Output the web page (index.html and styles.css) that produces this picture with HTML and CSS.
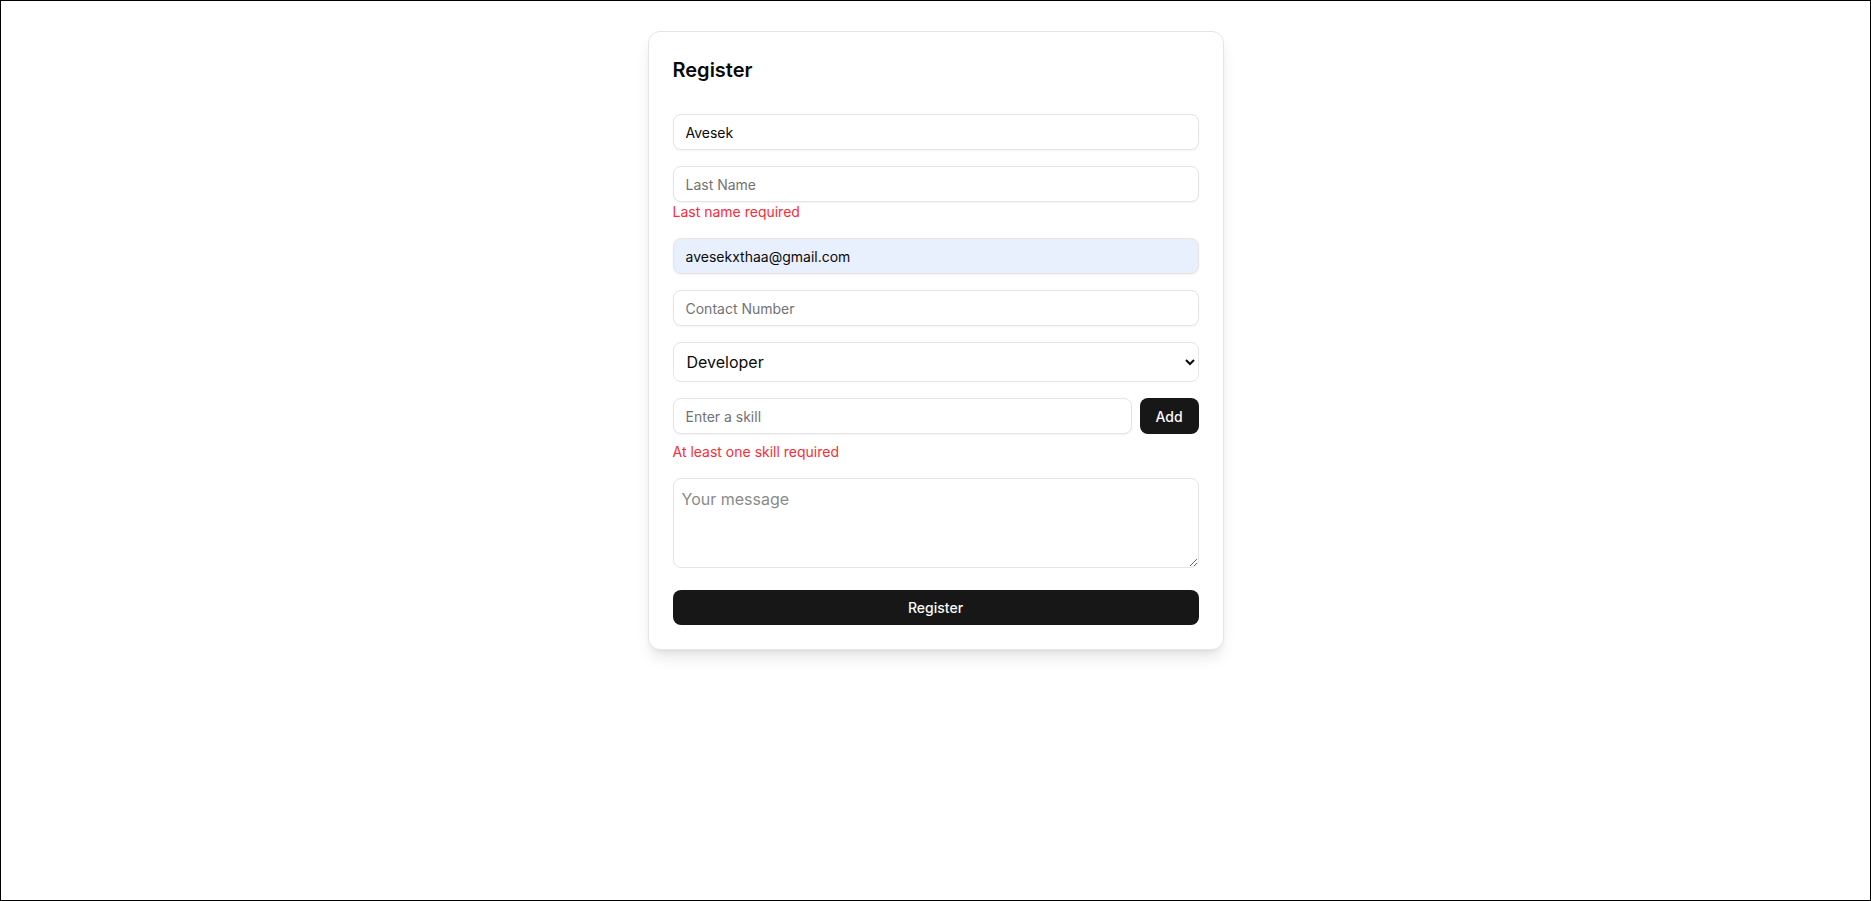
FILE: index.html
```html
<!DOCTYPE html>
<html lang="en">
<head>
<meta charset="utf-8">
<title>Register</title>
<link rel="stylesheet" href="styles.css">
</head>
<body>
<div class="frame">
  <div class="card">
    <h2 class="title">Register</h2>
    <form class="form" novalidate>
      <input class="input" type="text" value="Avesek" placeholder="First Name">
      <div class="field">
        <input class="input" type="text" placeholder="Last Name">
        <p class="error">Last name required</p>
      </div>
      <input class="input autofill" type="email" value="avesekxthaa@gmail.com" placeholder="Email">
      <input class="input" type="tel" placeholder="Contact Number">
      <select class="select">
        <option>Developer</option>
        <option>Designer</option>
        <option>Manager</option>
      </select>
      <div class="field">
        <div class="skill-row">
          <input class="input skill-input" type="text" placeholder="Enter a skill">
          <button class="btn btn-add" type="button">Add</button>
        </div>
        <p class="error error-gap">At least one skill required</p>
      </div>
      <textarea class="textarea" rows="3" placeholder="Your message"></textarea>
      <button class="btn btn-submit" type="button">Register</button>
    </form>
  </div>
</div>
</body>
</html>
```

FILE: styles.css
```css
* {
  box-sizing: border-box;
}

html, body {
  margin: 0;
  padding: 0;
  background: #ffffff;
}

body {
  font-family: Inter, "Noto Sans", "Liberation Sans", sans-serif;
  color: #0a0a0a;
}

.frame {
  height: 901px;
  border: 1px solid #000000;
  padding-top: 30px;
}

.card {
  width: 576px;
  margin: 0 auto;
  padding: 24px;
  background: #ffffff;
  border: 1px solid #e5e5e5;
  border-radius: 12px;
  box-shadow: 0 10px 15px -3px rgba(0, 0, 0, 0.1), 0 4px 6px -4px rgba(0, 0, 0, 0.1);
}

.title {
  margin: 0 0 30px;
  font-size: 20px;
  line-height: 28px;
  font-weight: 600;
  color: #0a0a0a;
}

.form {
  display: flex;
  flex-direction: column;
  gap: 16px;
  margin: 0;
}

.field {
  display: flex;
  flex-direction: column;
}

.input {
  display: block;
  width: 100%;
  height: 36px;
  padding: 4px 12px;
  font-family: inherit;
  font-size: 14px;
  line-height: 20px;
  color: #0a0a0a;
  background: #ffffff;
  border: 1px solid #e5e5e5;
  border-radius: 8px;
  box-shadow: 0 1px 2px 0 rgba(0, 0, 0, 0.05);
  outline: none;
}

.input::placeholder {
  color: #737373;
}

.autofill {
  background: #e8f0fe;
}

.select {
  display: block;
  width: 100%;
  height: 40px;
  padding: 0 8px 0 9px;
  font-family: inherit;
  font-size: 16px;
  color: #0a0a0a;
  background: #ffffff;
  border: 1px solid #e5e5e5;
  border-radius: 8px;
  outline: none;
}

.error {
  margin: 0;
  font-size: 14px;
  line-height: 20px;
  color: #fb2c36;
}

.error-gap {
  margin-top: 8px;
}

.skill-row {
  display: flex;
  gap: 8px;
}

.skill-input {
  flex: 1;
  width: auto;
}

.btn {
  height: 36px;
  font-family: inherit;
  font-size: 14px;
  font-weight: 500;
  color: #fafafa;
  background: #171717;
  border: none;
  border-radius: 8px;
  cursor: pointer;
}

.btn-add {
  width: 59px;
  flex: none;
  padding: 0 16px;
}

.textarea {
  display: block;
  width: 100%;
  padding: 8px;
  font-family: inherit;
  font-size: 16px;
  line-height: 24px;
  color: #0a0a0a;
  background: #ffffff;
  border: 1px solid #e5e5e5;
  border-radius: 8px;
  outline: none;
}

.textarea::placeholder {
  color: #8a8a8a;
}

.btn-submit {
  width: 100%;
  height: 35px;
  margin-top: 6px;
}
```
